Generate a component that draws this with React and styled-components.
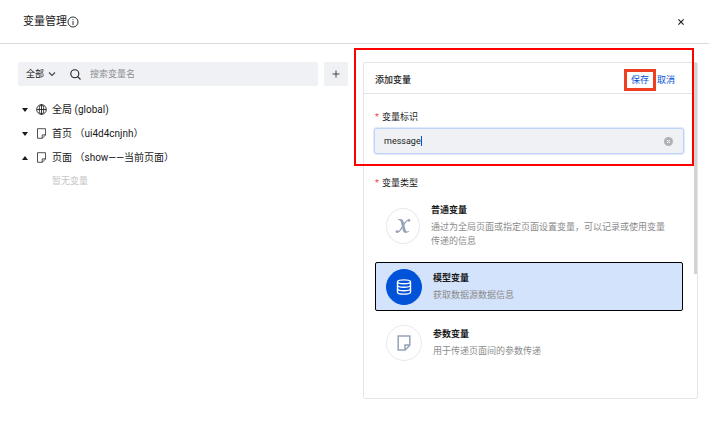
import React, {useState} from 'react'
import styled, {createGlobalStyle} from 'styled-components'

const GlobalStyle = createGlobalStyle`
    * {
      box-sizing: border-box;
    }

    body {
      margin: 0;
      background: #fff;
      color: #1a1a1a;
      font: 9px/14px Roboto, "Noto Sans CJK SC", sans-serif;
    }

    button, input, select {
      margin: 0;
      padding: 0;
      border: 0;
      background: none;
      color: inherit;
      font: inherit;
    }

    button {
      cursor: pointer;
    }

    svg {
      display: block;
      flex: none;
    }
`

const Page = styled.div`
    position: relative;
`

const TitleBar = styled.header`
    display: flex;
    align-items: center;
    justify-content: space-between;
    height: 44px;
    padding: 0 24px 0 23px;
    border-bottom: 1px solid #d9dae2;
`

const Title = styled.h1`
    display: flex;
    align-items: center;
    margin: 0;
    font-size: 11px;
    font-weight: 400;
    line-height: 16px;
`

const IconButton = styled.button`
    display: flex;
    align-items: center;
    justify-content: center;
`

const Columns = styled.main`
    display: grid;
    grid-template-columns: 330fr 335fr;
    grid-column-gap: 15px;
    align-items: start;
    padding: 18px 11px 24px 18px;
`

const SearchRow = styled.div`
    display: flex;
    gap: 6px;
`

const SearchBox = styled.div`
    display: flex;
    align-items: center;
    flex: 1;
    min-width: 0;
    height: 24px;
    padding-left: 8px;
    border-radius: 2px;
    background: #f0f1f5;
`

const ScopeSelect = styled.select`
    appearance: none;
    width: 22px;
    height: 16px;
`

const SearchInput = styled.input`
    flex: 1;
    min-width: 0;
    margin-left: 9px;
    outline: none;

    &::placeholder {
      color: #8d8f94;
      opacity: 1;
    }
`

const Spacer = styled.span`
    width: 14px;
`

const AddButton = styled(IconButton)`
    width: 24px;
    height: 24px;
    border-radius: 2px;
    background: #f0f1f5;
`

const Tree = styled.ul`
    margin: 12px 0 0;
    padding: 0;
    list-style: none;
`

const TreeToggle = styled.button`
    display: flex;
    align-items: center;
    height: 24px;
    padding-left: 4px;
    font-size: 10px;

    svg {
      margin-bottom: 2px;
    }
`

const Arrow = styled.span`
    margin-right: 8px;
    border: 3px solid transparent;
    border-top: ${(props) => (props.$up ? '0' : '4px solid #1a1a1a')};
    border-bottom: ${(props) => (props.$up ? '4px solid #1a1a1a' : '0')};
`

const TreeLabel = styled.span`
    margin-left: 5px;
`

const Empty = styled.p`
    margin: 4px 0 0 34px;
    color: #c6c6c6;
`

const Card = styled.form`
    position: relative;
    border: 1px solid #e3e4ea;
    border-radius: 2px;
`

const ScrollThumb = styled.div`
    position: absolute;
    top: 0;
    right: 0;
    width: 3px;
    height: 211px;
    background: #d3d3d3;
`

const CardHeader = styled.div`
    display: flex;
    align-items: center;
    justify-content: space-between;
    height: 31px;
    padding: 3px 22px 0 11px;
    border-bottom: 1px solid #e3e4ea;
`

const CardTitle = styled.h2`
    margin: 0;
    font-size: 9px;
    font-weight: 500;
`

const Actions = styled.div`
    display: flex;
    gap: 8px;
`

const TextButton = styled.button`
    position: relative;
    color: #0052d9;
`

const SaveMark = styled.span`
    position: absolute;
    inset: -4px -7px;
    border: 3px solid #ee3f22;
    pointer-events: none;
`

const CardBody = styled.div`
    padding: 16px 14px 31px 10px;
`

const FieldLabel = styled.label`
    display: block;
    margin-left: 1px;

    &::before {
      content: '*';
      margin-right: 3px;
      color: #f0494b;
    }
`

const Field = styled.div`
    display: flex;
    align-items: center;
    height: 26px;
    margin: 4px -1px 22px 0;
    padding: 0 10px 0 9px;
    border: 1px solid #bfd3f8;
    border-radius: 3px;
    background: #f0f1f5;
    box-shadow: 0 0 0 1px #e0eafc;
`

const NameInput = styled.input`
    field-sizing: content;
    min-width: 1px;
    outline: none;
    caret-color: transparent;
`

const Caret = styled.span`
    width: 1px;
    height: 10px;
    margin-right: auto;
    background: #0052d9;
`

const Options = styled.fieldset`
    display: grid;
    grid-row-gap: 7px;
    min-width: 0;
    margin: 0 0 0 1px;
    padding: 0;
    border: 0;
`

const Legend = styled(FieldLabel).attrs({as: 'legend'})`
    margin: 0 0 7px;
    padding: 0;
`

const Option = styled.label`
    display: flex;
    align-items: center;
    min-height: 49px;
    padding: 5px 10px;
    border: 1px solid ${(props) => (props.$active ? '#000' : 'transparent')};
    border-radius: 2px;
    background: ${(props) => (props.$active ? '#d4e3fc' : 'transparent')};
    cursor: pointer;
`

const Radio = styled.input`
    appearance: none;
    width: 0;
`

const Badge = styled.span`
    display: flex;
    align-items: center;
    justify-content: center;
    flex: none;
    width: ${(props) => (props.$narrow ? '34px' : '36px')};
    height: 36px;
    margin-right: 11px;
    border: 1px solid ${(props) => (props.$active ? '#0052d9' : '#e9eaed')};
    border-radius: 50%;
    background: ${(props) => (props.$active ? '#0052d9' : '#fff')};
    color: ${(props) => (props.$active ? '#fff' : '#97a3b7')};
`

const OptionText = styled.span`
    padding-bottom: 1px;
`

const OptionName = styled.strong`
    display: block;
    margin-bottom: 3px;
    font-weight: 700;
`

const OptionHint = styled.span`
    display: block;
    color: #8b8b8b;
`

const PanelMark = styled.div`
    position: absolute;
    top: 48px;
    right: 15px;
    width: 340px;
    height: 118px;
    border: 2px solid #f00;
    pointer-events: none;
`

const InfoIcon = () => (
  <svg width="12" height="12" viewBox="0 0 12 12" fill="none" stroke="currentColor" strokeWidth=".9">
    <circle cx="6" cy="6" r="5" />
    <path d="M6 5v4M6 3v1" />
  </svg>
)

const CloseIcon = () => (
  <svg width="8" height="8" viewBox="0 0 8 8" fill="none" stroke="currentColor" strokeWidth="1.1">
    <path d="M1.4 1.4l5.2 5.2M6.6 1.4L1.4 6.6" />
  </svg>
)

const ChevronIcon = () => (
  <svg width="8" height="8" viewBox="0 0 8 8" fill="none" stroke="#444" strokeWidth="1.1">
    <path d="M1 2.5l3 3 3-3" />
  </svg>
)

const SearchIcon = () => (
  <svg width="11" height="11" viewBox="0 0 11 11" fill="none" stroke="#222" strokeWidth="1.1">
    <circle cx="4.8" cy="4.8" r="4" />
    <path d="M7.7 7.7l2.8 2.8" />
  </svg>
)

const PlusIcon = () => (
  <svg width="8" height="8" viewBox="0 0 8 8" stroke="#444">
    <path d="M4 .5v7M.5 4h7" />
  </svg>
)

const GlobeIcon = () => (
  <svg width="11" height="11" viewBox="0 0 11 11" fill="none" stroke="#222" strokeWidth=".9">
    <circle cx="5.5" cy="5.5" r="4.8" />
    <ellipse cx="5.5" cy="5.5" rx="2.2" ry="4.8" />
    <path d="M.7 5.5h9.6M5.5 .7v9.6" />
  </svg>
)

const PageIcon = ({size = 11, strokeWidth = 1.1}) => (
  <svg width={size} height={size} viewBox="0 0 16 16" fill="none" stroke="currentColor" strokeWidth={strokeWidth}>
    <path d="M2.2 1h11.6v9.2L9.2 15h-7zM13.8 10H9v5" />
  </svg>
)

const VariableIcon = () => (
  <svg width="16" height="16" viewBox="0 0 16 16" fill="currentColor">
    <path d="M3.2 1.2C6.300 .5 8 1 8.600 3.600l1.900 8c.4 1.700 1.300 2.300 3.500 1.300l.4.7c-3.500 2.100-5.900 1.900-6.700-1.500L6 4.600C5.500 2.500 4.900 2 3.200 2.200z" />
    <path d="M14.200 2.200C12.200 1.600 11 3 8.600 6.800S4.600 14.800 1.800 14" fill="none" stroke="currentColor" strokeWidth="1.300" />
    <circle cx="14" cy="2.400" r="1.300" />
    <circle cx="1.900" cy="13.600" r="1.300" />
  </svg>
)

const DatabaseIcon = () => (
  <svg width="16" height="16" viewBox="0 0 16 16" fill="none" stroke="currentColor" strokeWidth="1.4">
    <ellipse cx="8" cy="2.8" rx="6.500" ry="1.900" />
    <path d="M1.500 2.800v10.400c0 1 2.900 1.900 6.500 1.900s6.500-.9 6.500-1.900V2.800" />
    <path d="M1.500 6.300c0 1 2.900 1.900 6.500 1.900s6.500-.9 6.500-1.900M1.500 9.800c0 1 2.900 1.900 6.500 1.900s6.500-.9 6.500-1.900" />
  </svg>
)

const ClearIcon = () => (
  <svg width="9" height="9" viewBox="0 0 9 9">
    <circle cx="4.5" cy="4.5" r="4.5" fill="#b0b1b4" />
    <path d="M3 3l3 3M6 3L3 6" stroke="#fff" strokeWidth=".9" />
  </svg>
)

const scopes = [
  {id: 'global', label: '全局 (global)', icon: <GlobeIcon />},
  {id: 'home', label: '首页 （ui4d4cnjnh）', icon: <PageIcon />},
  {id: 'show', label: '页面 （show——当前页面）', icon: <PageIcon />, open: true},
]

const types = [
  {
    id: 'normal',
    name: '普通变量',
    hint: '通过为全局页面或指定页面设置变量，可以记录或使用变量传递的信息',
    icon: <VariableIcon />,
    narrow: true,
  },
  {id: 'model', name: '模型变量', hint: '获取数据源数据信息', icon: <DatabaseIcon />},
  {id: 'param', name: '参数变量', hint: '用于传递页面间的参数传递', icon: <PageIcon size={16} strokeWidth={1.5} />},
]

const App = () => {
  const [name, setName] = useState('message')
  const [type, setType] = useState('model')

  return (
    <Page>
      <GlobalStyle />
      <TitleBar>
        <Title>变量管理<InfoIcon /></Title>
        <IconButton type="button" aria-label="关闭"><CloseIcon /></IconButton>
      </TitleBar>
      <Columns>
        <section>
          <SearchRow>
            <SearchBox>
              <ScopeSelect aria-label="范围">
                <option>全部</option>
              </ScopeSelect>
              <ChevronIcon />
              <Spacer />
              <SearchIcon />
              <SearchInput type="text" aria-label="搜索变量名" placeholder="搜索变量名" />
            </SearchBox>
            <AddButton type="button" aria-label="添加"><PlusIcon /></AddButton>
          </SearchRow>
          <Tree>
            {scopes.map((scope) => (
              <li key={scope.id}>
                <TreeToggle type="button">
                  <Arrow $up={scope.open} />
                  {scope.icon}
                  <TreeLabel>{scope.label}</TreeLabel>
                </TreeToggle>
                {scope.open && <Empty>暂无变量</Empty>}
              </li>
            ))}
          </Tree>
        </section>
        <Card onSubmit={(e) => e.preventDefault()}>
          <CardHeader>
            <CardTitle>添加变量</CardTitle>
            <Actions>
              <TextButton type="submit">保存<SaveMark /></TextButton>
              <TextButton type="button">取消</TextButton>
            </Actions>
          </CardHeader>
          <CardBody>
            <FieldLabel htmlFor="name">变量标识</FieldLabel>
            <Field>
              <NameInput id="name" type="text" value={name} onChange={(e) => setName(e.target.value)} />
              <Caret />
              <IconButton type="button" aria-label="清空" onClick={() => setName('')}><ClearIcon /></IconButton>
            </Field>
            <Options>
              <Legend>变量类型</Legend>
              {types.map((item) => {
                const active = item.id === type
                return (
                  <Option key={item.id} $active={active}>
                    <Radio type="radio" name="type" checked={active} onChange={() => setType(item.id)} />
                    <Badge $active={active} $narrow={item.narrow}>{item.icon}</Badge>
                    <OptionText>
                      <OptionName>{item.name}</OptionName>
                      <OptionHint>{item.hint}</OptionHint>
                    </OptionText>
                  </Option>
                )
              })}
            </Options>
          </CardBody>
          <ScrollThumb />
        </Card>
      </Columns>
      <PanelMark />
    </Page>
  )
}

export default App
